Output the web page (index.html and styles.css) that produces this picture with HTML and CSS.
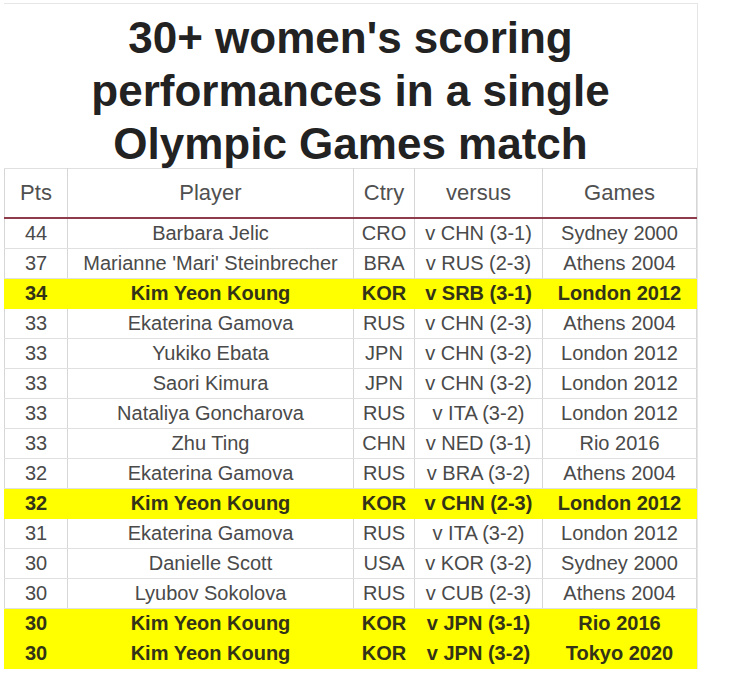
FILE: index.html
```html
<!DOCTYPE html>
<html>
<head>
<meta charset="utf-8">
<link rel="stylesheet" href="styles.css">
</head>
<body>
<div class="card">
  <h1 class="title">30+ women's scoring<br>performances in a single<br>Olympic Games match</h1>
  <table class="grid">
    <colgroup>
      <col class="c-pts"><col class="c-player"><col class="c-ctry"><col class="c-vs"><col class="c-games">
    </colgroup>
    <thead>
      <tr><th>Pts</th><th>Player</th><th>Ctry</th><th>versus</th><th>Games</th></tr>
    </thead>
    <tbody>
      <tr><td>44</td><td>Barbara Jelic</td><td>CRO</td><td>v CHN (3-1)</td><td>Sydney 2000</td></tr>
      <tr><td>37</td><td>Marianne 'Mari' Steinbrecher</td><td>BRA</td><td>v RUS (2-3)</td><td>Athens 2004</td></tr>
      <tr class="hl"><td>34</td><td>Kim Yeon Koung</td><td>KOR</td><td>v SRB (3-1)</td><td>London 2012</td></tr>
      <tr><td>33</td><td>Ekaterina Gamova</td><td>RUS</td><td>v CHN (2-3)</td><td>Athens 2004</td></tr>
      <tr><td>33</td><td>Yukiko Ebata</td><td>JPN</td><td>v CHN (3-2)</td><td>London 2012</td></tr>
      <tr><td>33</td><td>Saori Kimura</td><td>JPN</td><td>v CHN (3-2)</td><td>London 2012</td></tr>
      <tr><td>33</td><td>Nataliya Goncharova</td><td>RUS</td><td>v ITA (3-2)</td><td>London 2012</td></tr>
      <tr><td>33</td><td>Zhu Ting</td><td>CHN</td><td>v NED (3-1)</td><td>Rio 2016</td></tr>
      <tr><td>32</td><td>Ekaterina Gamova</td><td>RUS</td><td>v BRA (3-2)</td><td>Athens 2004</td></tr>
      <tr class="hl"><td>32</td><td>Kim Yeon Koung</td><td>KOR</td><td>v CHN (2-3)</td><td>London 2012</td></tr>
      <tr><td>31</td><td>Ekaterina Gamova</td><td>RUS</td><td>v ITA (3-2)</td><td>London 2012</td></tr>
      <tr><td>30</td><td>Danielle Scott</td><td>USA</td><td>v KOR (3-2)</td><td>Sydney 2000</td></tr>
      <tr><td>30</td><td>Lyubov Sokolova</td><td>RUS</td><td>v CUB (2-3)</td><td>Athens 2004</td></tr>
      <tr class="hl"><td>30</td><td>Kim Yeon Koung</td><td>KOR</td><td>v JPN (3-1)</td><td>Rio 2016</td></tr>
      <tr class="hl"><td>30</td><td>Kim Yeon Koung</td><td>KOR</td><td>v JPN (3-2)</td><td>Tokyo 2020</td></tr>
    </tbody>
  </table>
</div>
</body>
</html>
```

FILE: styles.css
```css
html, body {
  margin: 0;
  padding: 0;
  background: #ffffff;
}
body {
  font-family: "Liberation Sans", Arial, sans-serif;
  padding: 3px 0 0 4px;
}
.card {
  width: 694px;
  border-top: 1px solid #e6e6e6;
  border-right: 1px solid #e6e6e6;
  box-sizing: border-box;
}
.title {
  margin: 0;
  height: 164px;
  box-sizing: border-box;
  padding-top: 7px;
  text-align: center;
  font-size: 44px;
  line-height: 53px;
  font-weight: bold;
  color: #222222;
}
.grid {
  width: 100%;
  border-collapse: collapse;
  table-layout: fixed;
}
.c-pts { width: 63px; }
.c-player { width: 286px; }
.c-ctry { width: 61px; }
.c-vs { width: 128px; }
.c-games { width: auto; }
.grid th, .grid td {
  text-align: center;
  color: #4a4a4a;
  font-size: 20px;
  font-weight: normal;
  padding: 0;
  white-space: nowrap;
  border-left: 1px solid #d6d6d6;
  border-right: 1px solid #d6d6d6;
  border-top: 1px solid #e0e0e0;
  border-bottom: 1px solid #e0e0e0;
}
.grid th {
  height: 48px;
  font-size: 22px;
  color: #505050;
  border-bottom: 2px solid #8e3b4b;
}
.grid td {
  height: 29px;
}
.grid tr.hl td {
  background: #ffff00;
  color: #333318;
  font-weight: bold;
  border-color: #ffff00;
}
```
